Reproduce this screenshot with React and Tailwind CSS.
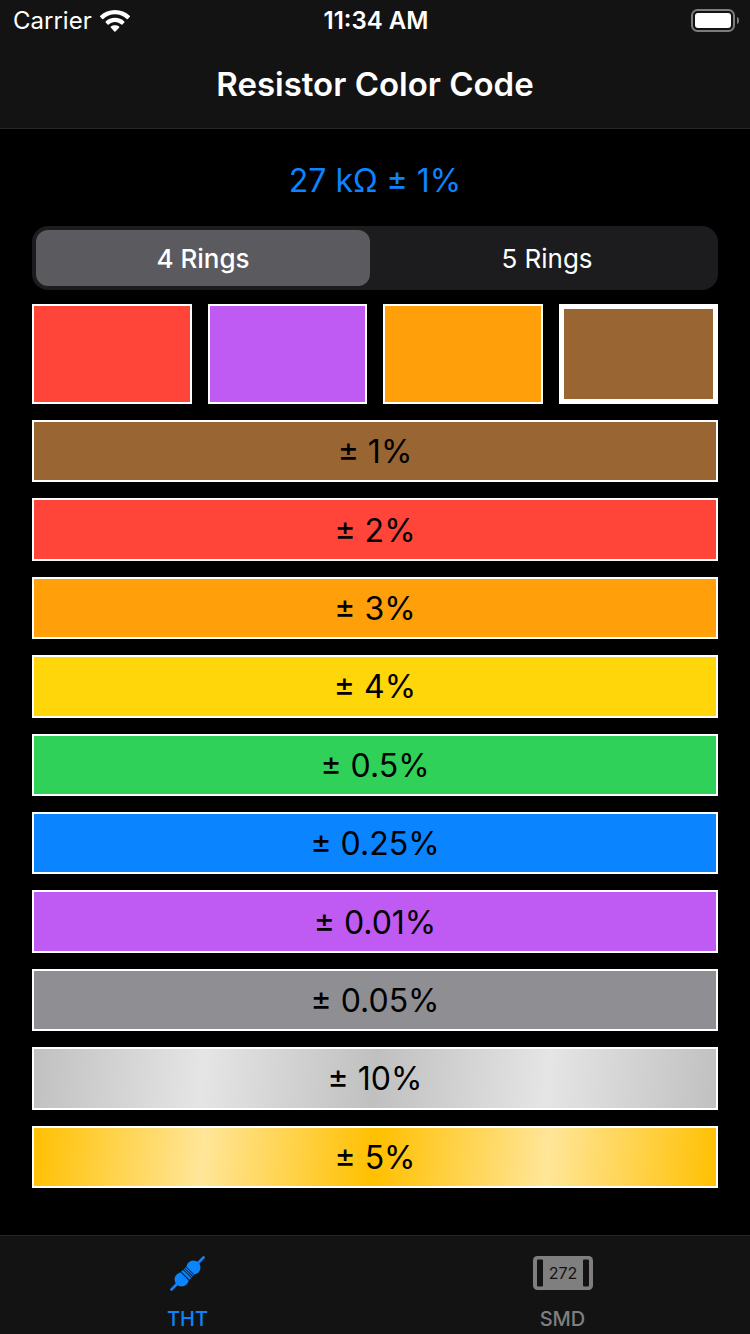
import { useState } from "react";

const rings = [
  { name: "First ring", color: "bg-[#ff453a]" },
  { name: "Second ring", color: "bg-[#bf5af2]" },
  { name: "Multiplier ring", color: "bg-[#ff9f0a]" },
  { name: "Tolerance ring", color: "bg-[#996633]" },
];

const tolerances = [
  { label: "± 1%", color: "bg-[#996633]" },
  { label: "± 2%", color: "bg-[#ff453a]" },
  { label: "± 3%", color: "bg-[#ff9f0a]" },
  { label: "± 4%", color: "bg-[#ffd60a]" },
  { label: "± 0.5%", color: "bg-[#30d158]" },
  { label: "± 0.25%", color: "bg-[#0a84ff]" },
  { label: "± 0.01%", color: "bg-[#bf5af2]" },
  { label: "± 0.05%", color: "bg-[#8e8e93]" },
  {
    label: "± 10%",
    color: "bg-[linear-gradient(95deg,#c0c0c0,#e5e5e5_25%,#c0c0c0_50%,#e5e5e5_75%,#c0c0c0)]",
  },
  {
    label: "± 5%",
    color: "bg-[linear-gradient(95deg,#ffc000,#ffe699_25%,#ffc000_50%,#ffe699_75%,#ffc000)]",
  },
];

function WifiIcon() {
  return (
    <svg viewBox="0 0 30 22" className="h-[22px] w-[30px]" fill="currentColor" aria-hidden="true">
      <path d="M15 0C9.300 0 4.100 2.200.3 5.800a.8.800 0 0 0 0 1.200l1.900 1.900c.3.300.8.300 1.100 0C6.400 6 10.500 4.300 15 4.300S23.600 6 26.700 8.900c.3.300.8.300 1.100 0L29.700 7a.8.800 0 0 0 0-1.200C25.900 2.200 20.700 0 15 0Z" />
      <path d="M15 7.800c-3.600 0-6.900 1.400-9.300 3.600a.8.800 0 0 0 0 1.200l1.900 1.900c.3.300.8.300 1.100 0 1.700-1.500 3.900-2.400 6.300-2.400s4.600.9 6.300 2.400c.3.300.8.300 1.100 0l1.900-1.900a.8.800 0 0 0 0-1.200C21.900 9.200 18.600 7.800 15 7.800Z" />
      <path d="M15 15.200c-1.600 0-3 .5-4.100 1.400a.8.800 0 0 0 0 1.200l3.500 3.600c.3.300.8.300 1.100 0l3.600-3.600a.8.800 0 0 0 0-1.200A6.400 6.400 0 0 0 15 15.200Z" />
    </svg>
  );
}

function BatteryIcon() {
  return (
    <svg viewBox="0 0 48 23" className="h-[23px] w-[48px]" aria-hidden="true">
      <rect x="1" y="1" width="42" height="21" rx="5.500" fill="none" stroke="#7c7c7c" strokeWidth="2" />
      <rect x="4" y="4" width="36" height="15" rx="3" fill="#fff" />
      <path d="M46 8c1.500.6 2 1.800 2 3.500s-.5 2.900-2 3.500Z" fill="#7c7c7c" />
    </svg>
  );
}

function ResistorIcon() {
  return (
    <svg viewBox="0 0 36 36" className="size-9" fill="currentColor" aria-hidden="true">
      <g transform="translate(17.500 17.500) rotate(-45)">
        <rect x="-24" y="-1.400" width="12" height="2.800" rx="1.200" />
        <rect x="12" y="-1.400" width="12" height="2.800" rx="1.200" />
        <path d="M-4-5.800C-5.400-6.100-6.400-7-8.400-7a7 7 0 0 0 0 14c2 0 3-.9 4.400-1.200Z" />
        <rect x="-3.100" y="-5.800" width="2.400" height="11.600" />
        <rect x="0.100" y="-5.800" width="1.200" height="11.600" />
        <rect x="2.100" y="-5.800" width="1.200" height="11.600" />
        <path d="M4.100-5.800C5.400-6.100 6.400-7 8.400-7a7 7 0 0 1 0 14c-2 0-3-.9-4.300-1.200Z" />
      </g>
    </svg>
  );
}

function ChipIcon() {
  return (
    <svg viewBox="0 0 60 34" className="h-[34px] w-[60px]" aria-hidden="true">
      <rect width="60" height="34" rx="4.500" fill="#7f7f7f" />
      <rect x="4" y="3.500" width="6" height="27" rx="1" fill="#131313" />
      <rect x="50" y="3.500" width="6" height="27" rx="1" fill="#131313" />
      <text x="30" y="23" textAnchor="middle" fontSize="16" fontWeight="400" fill="#131313">
        272
      </text>
    </svg>
  );
}

export default function App() {
  const [mode, setMode] = useState(4);
  const [ring, setRing] = useState(3);

  return (
    <div className="flex min-h-screen flex-col bg-black font-[Inter,'Liberation_Sans',sans-serif] text-white">
      <header className="border-b border-[#282828] bg-[#131313]">
        <div className="grid h-10 grid-cols-3 items-center pt-px pr-[11px] pl-[13px]">
          <div className="flex items-center gap-2 text-[24px]">
            <span>Carrier</span>
            <WifiIcon />
          </div>
          <time className="text-center text-[24px] font-semibold">11:34 AM</time>
          <div className="flex justify-end">
            <BatteryIcon />
          </div>
        </div>
        <h1 className="flex h-[88px] items-center justify-center pt-0.5 text-[33px] font-semibold">
          Resistor Color Code
        </h1>
      </header>

      <main className="flex flex-1 flex-col px-8 pb-[47px]">
        <output className="flex h-[97px] items-center justify-center pt-1.5 text-[32px] text-[#0a84ff]">
          27 kΩ ± 1%
        </output>

        <div className="grid h-16 grid-cols-2 gap-2.5 rounded-2xl bg-[#1c1c1e] p-1 text-[26px]">
          {[4, 5].map((count) => (
            <button
              key={count}
              type="button"
              aria-pressed={mode === count}
              onClick={() => setMode(count)}
              className={
                mode === count ? "rounded-xl bg-[#5b5a5f] font-medium" : "rounded-xl"
              }
            >
              {count} Rings
            </button>
          ))}
        </div>

        <div className="mt-[14px] grid h-[100px] grid-cols-4 gap-4">
          {rings.map(({ name, color }, index) => (
            <button
              key={name}
              type="button"
              aria-label={name}
              aria-pressed={ring === index}
              onClick={() => setRing(index)}
              className={`border-white ${color} ${ring === index ? "border-5" : "border-2"}`}
            />
          ))}
        </div>

        <div className="mt-4 flex flex-1 flex-col gap-4">
          {tolerances.map(({ label, color }) => (
            <button
              key={label}
              type="button"
              className={`flex-1 border-2 border-white bg-origin-border pt-0.5 text-[32px] leading-10 text-black ${color}`}
            >
              {label}
            </button>
          ))}
        </div>
      </main>

      <nav className="grid h-[99px] grid-cols-2 border-t border-[#282828] bg-[#131313] text-[20px] leading-6 font-medium">
        <a href="#tht" aria-current="page" className="flex flex-col items-center gap-[15px] pt-5 text-[#0a84ff]">
          <ResistorIcon />
          THT
        </a>
        <a href="#smd" className="flex flex-col items-center gap-[15px] pt-5 text-[#7f7f7f]">
          <span className="flex h-9 items-start">
            <ChipIcon />
          </span>
          SMD
        </a>
      </nav>
    </div>
  );
}
